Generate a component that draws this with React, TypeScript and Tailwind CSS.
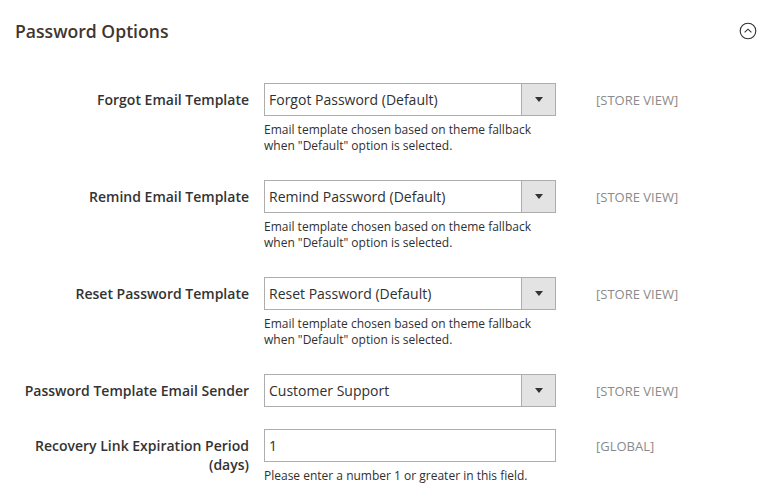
import { ReactNode } from "react";

const font = { fontFamily: '"Open Sans", Arial, sans-serif' };

const Note = ({ children }: { children: ReactNode }) => (
  <div className="mt-[6px] text-[12px] leading-4 text-[#303030]">{children}</div>
);

const Select = ({ value }: { value: string }) => (
  <div className="flex h-[33px] w-[292px] border border-[#adadad] bg-white">
    <div className="flex flex-1 items-center pl-[4px] text-[14px] text-[#303030]">{value}</div>
    <div className="flex w-[34px] items-center justify-center border-l border-[#adadad] bg-[#e3e3e3]">
      <svg width="8" height="5" viewBox="0 0 8 5">
        <path d="M0 0 H8 L4 5 Z" fill="#333" />
      </svg>
    </div>
  </div>
);

const Row = ({
  label,
  children,
  scope,
  className,
  labelClass,
}: {
  label: ReactNode;
  children: ReactNode;
  scope: string;
  className: string;
  labelClass?: string;
}) => (
  <div className={"flex " + className}>
    <div className={"w-[234px] text-right text-[14px] font-semibold text-[#333] " + (labelClass ?? "pt-[7px] leading-[20px]")}>
      {label}
    </div>
    <div className="ml-[15px] w-[292px]">{children}</div>
    <div className="ml-[40px] pt-[7px] text-[13px] leading-[20px] text-[#8a8a8a]">{scope}</div>
  </div>
);

const fallbackNote = (
  <Note>
    Email template chosen based on theme fallback
    <br />
    when "Default" option is selected.
  </Note>
);

export default function App() {
  return (
    <div className="min-h-screen bg-white px-[15px]" style={font}>
      {/* Section header */}
      <div className="flex h-[62px] items-center justify-between">
        <h2 className="text-[17.6px] font-semibold text-[#41362f]">Password Options</h2>
        <svg width="18" height="18" viewBox="0 0 18 18" className="mr-[1px]">
          <circle cx="9" cy="9" r="7.8" fill="none" stroke="#303030" strokeWidth="1.1" />
          <path d="M5.6 10.4 L9 7.2 L12.4 10.4" fill="none" stroke="#303030" strokeWidth="1.1" />
        </svg>
      </div>

      <div className="pt-[21px]">
        <Row label="Forgot Email Template" scope="[STORE VIEW]" className="mb-[26px]">
          <Select value="Forgot Password (Default)" />
          {fallbackNote}
        </Row>
        <Row label="Remind Email Template" scope="[STORE VIEW]" className="mb-[26px]">
          <Select value="Remind Password (Default)" />
          {fallbackNote}
        </Row>
        <Row label="Reset Password Template" scope="[STORE VIEW]" className="mb-[26px]">
          <Select value="Reset Password (Default)" />
          {fallbackNote}
        </Row>
        <Row label="Password Template Email Sender" scope="[STORE VIEW]" className="mb-[22px]">
          <Select value="Customer Support" />
        </Row>
        <Row
          label={
            <>
              Recovery Link Expiration Period
              <br />
              (days)
            </>
          }
          scope="[GLOBAL]"
          className=""
          labelClass="pt-[7px] leading-[19px]"
        >
          <input
            defaultValue="1"
            className="block h-[33px] w-[292px] border border-[#adadad] bg-white pl-[4px] text-[14px] text-[#303030] outline-none"
            style={font}
          />
          <Note>Please enter a number 1 or greater in this field.</Note>
        </Row>
      </div>
    </div>
  );
}
